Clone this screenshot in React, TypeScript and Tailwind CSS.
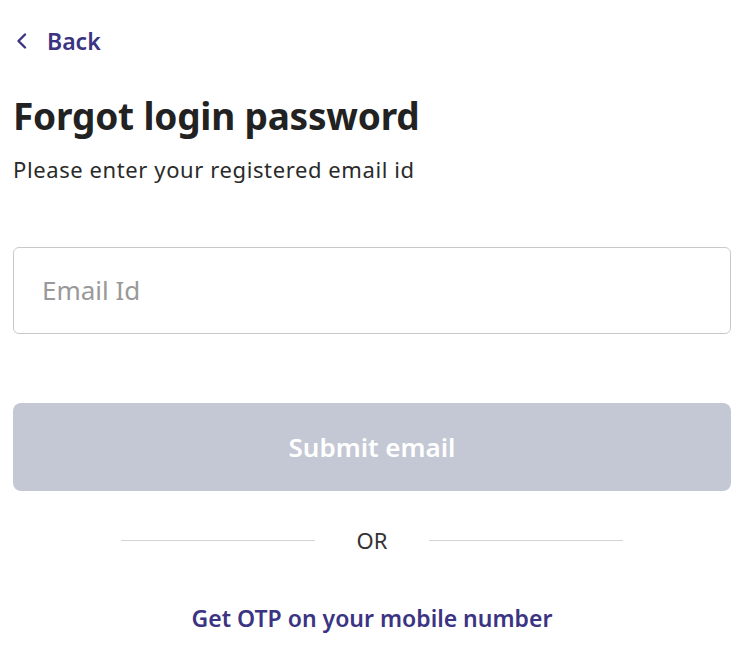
export default function App() {
  return (
    <div className="w-[750px] h-[664px] bg-white pl-[13px] pr-[19px] font-['Noto_Sans',sans-serif]">
      {/* Back link */}
      <a href="#" className="flex items-center gap-[20px] pt-[27px] pl-[3px] text-[#3b3482]">
        <svg width="11" height="16" viewBox="0 0 11 16" fill="none" stroke="currentColor" strokeWidth="2.4" strokeLinecap="round" strokeLinejoin="round">
          <path d="M9 1.5 L2.5 8 L9 14.5" />
        </svg>
        <span className="text-[23px] font-semibold leading-[28px]">Back</span>
      </a>

      {/* Title */}
      <h1 className="mt-[37px] text-[37px] font-bold leading-[48px] text-[#222] tracking-[-0.2px]">
        Forgot login password
      </h1>
      <p className="mt-[14px] text-[22px] leading-[30px] text-[#2a2a2a] tracking-[0.6px]">
        Please enter your registered email id
      </p>

      {/* Email input */}
      <div className="mt-[63px] h-[87px] rounded-[6px] border border-[#c9c9c9] flex items-center px-[28px]">
        <input
          type="email"
          placeholder="Email Id"
          className="w-full outline-none text-[26px] text-[#333] placeholder:text-[#999]"
        />
      </div>

      {/* Submit */}
      <button
        disabled
        className="mt-[69px] w-full h-[88px] rounded-[8px] bg-[#c4c8d4] text-white text-[26px] font-semibold"
      >
        Submit email
      </button>

      {/* Divider */}
      <div className="mt-[33px] flex items-center justify-center gap-[42px]">
        <div className="w-[194px] h-px bg-[#d4d4d4]" />
        <span className="text-[22px] text-[#333]">OR</span>
        <div className="w-[194px] h-px bg-[#d4d4d4]" />
      </div>

      {/* OTP link */}
      <div className="mt-[44px] text-center">
        <a href="#" className="text-[23px] font-semibold text-[#3b3482]">
          Get OTP on your mobile number
        </a>
      </div>
    </div>
  );
}
